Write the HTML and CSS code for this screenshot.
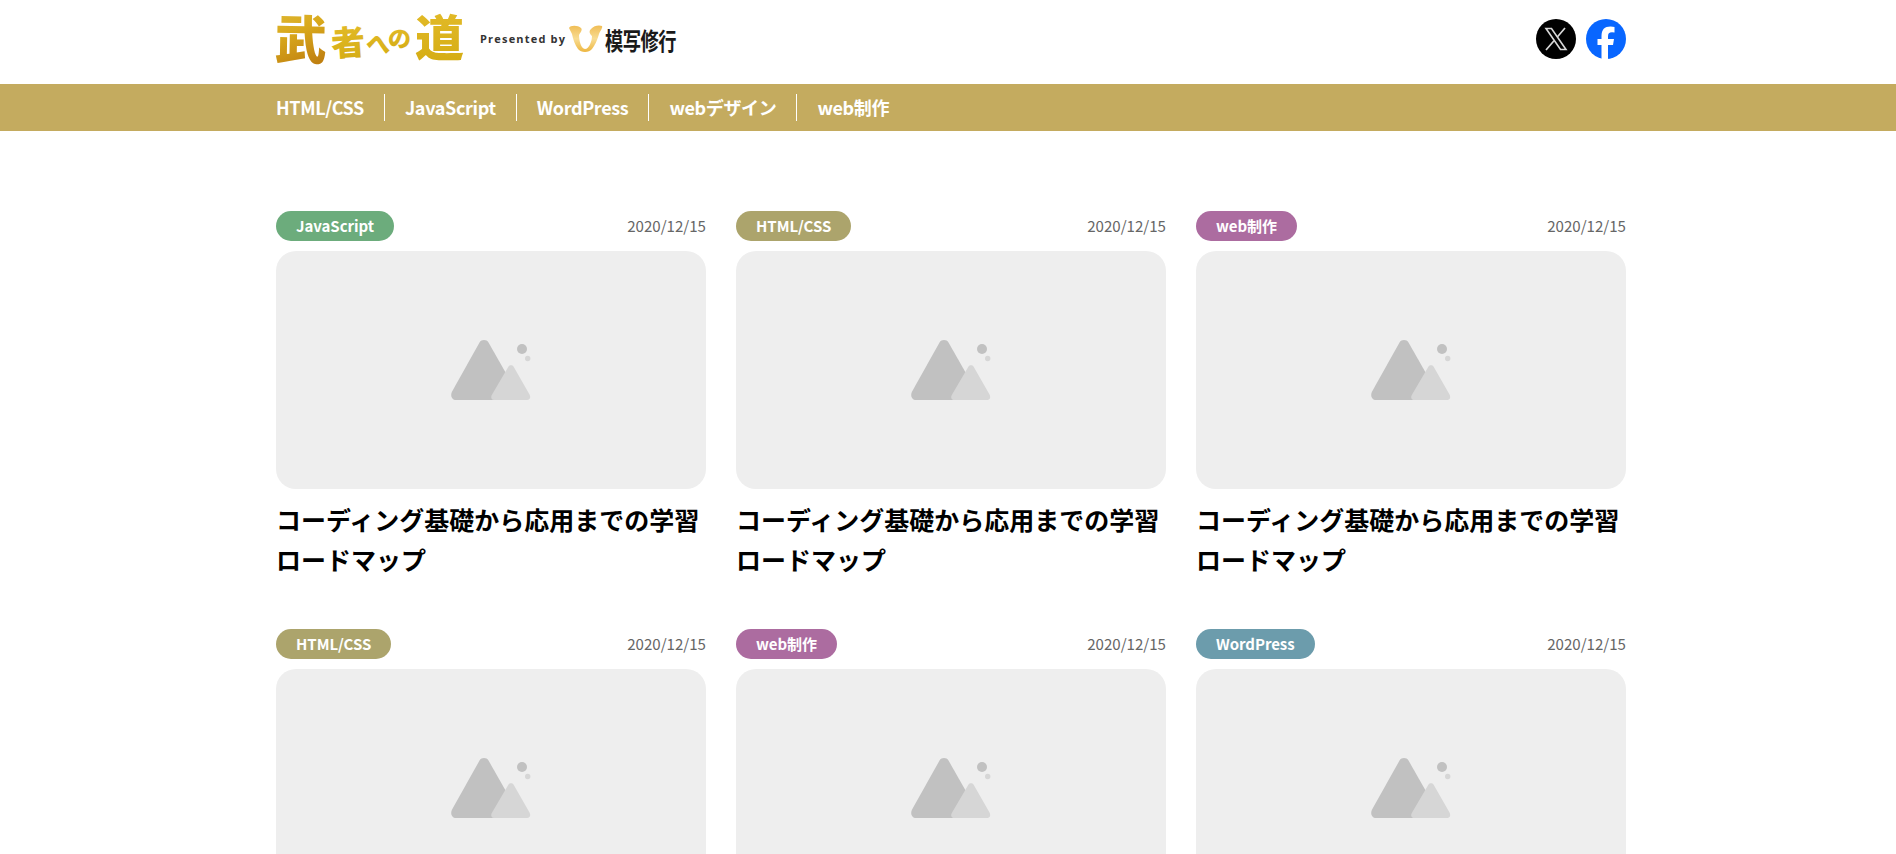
FILE: index.html
```html
<!DOCTYPE html>
<html lang="ja">
<head>
<meta charset="utf-8">
<title>武者への道</title>
<link rel="stylesheet" href="styles.css">
</head>
<body>
<svg class="defs" width="0" height="0" aria-hidden="true">
  <symbol id="noimage" viewBox="0 0 80 60">
    <path fill="#c1c1c1" d="M28.500 2.500C30.500-.7 35.500-.7 37.500 2.500L64 49V60H5C1 60-.8 56 .8 52Z"/>
    <path fill="#d6d6d6" d="M57.500 26.500C58.500 24.700 61.500 24.700 62.500 26.500L78.500 54.500C80 57.500 79 60 76 60H43C40.500 60 39.500 57.500 40.800 55Z"/>
    <circle cx="71" cy="9" r="5" fill="#c1c1c1"/>
    <circle cx="76.700" cy="18.500" r="2.700" fill="#d6d6d6"/>
  </symbol>
</svg>
<header class="header">
  <div class="container header__inner">
    <svg class="logo" viewBox="0 0 401 54" width="401" height="54" role="img">
      <defs>
        <linearGradient id="gold" x1="0" y1="0" x2=".3" y2="1">
          <stop offset="0" stop-color="#e0bd3c"/><stop offset=".5" stop-color="#d9a91c"/><stop offset="1" stop-color="#c08010"/>
        </linearGradient>
        <linearGradient id="yellow" x1="0" y1="0" x2="0" y2="1">
          <stop offset="0" stop-color="#e5bd2c"/><stop offset="1" stop-color="#d3ab12"/>
        </linearGradient>
        <linearGradient id="horn" x1="0" y1="0" x2="0" y2="1">
          <stop offset="0" stop-color="#f0bd55"/><stop offset=".5" stop-color="#f8dc92"/><stop offset="1" stop-color="#edb640"/>
        </linearGradient>
      </defs>
      <g class="logo__brush">
        <text x="-1" y="47" font-size="52" fill="url(#gold)" transform="rotate(1 25 25)">武</text>
        <text x="55" y="43" font-size="34" fill="url(#yellow)" transform="rotate(-4 72 30)">者</text>
        <text x="90" y="41" font-size="25" fill="url(#yellow)" transform="rotate(6 102 32)">へ</text>
        <text x="112" y="35" font-size="23" fill="url(#yellow)" transform="rotate(6 124 26)">の</text>
        <text x="139" y="44" font-size="49" fill="url(#yellow)">道</text>
      </g>
      <text class="logo__by" x="204" y="31" textLength="85">Presented by</text>
      <path fill="url(#horn)" d="M293 16C294 13 302 13 305 16C307 18 304 21 303 23C303 28 305 37 309 37C313 37 316 29 316 24C313 21 313 19 315 17C318 13 324 13 326 14C327 16 324 19 323 22C321 29 319 33 316 37C313 41 305 41 302 37C299 33 297 27 296 22Z"/>
      <g transform="translate(329 37.500) scale(.76 1)"><text class="logo__name" textLength="94">模写修行</text></g>
    </svg>
    <div class="sns">
      <svg viewBox="0 0 40 40" width="40" height="40"><circle cx="20" cy="20" r="20"/><path d="M10 9.500H15.500L30 30.500H24.500Z" fill="none" stroke="#d8d8d8" stroke-width="1.600"/><path d="M29 9L21.300 18M18 21.700L10 31" stroke="#d8d8d8" stroke-width="1.700"/></svg>
      <svg viewBox="0 0 40 40" width="40" height="40"><circle cx="20" cy="20" r="20" fill="#0866ff"/><path fill="#fff" d="M15.500 40V26H11.500V20H15.500V17C15.500 10.500 18.500 7.500 24.500 7.500Q27 7.500 28.500 8V13.500Q27.500 13.300 26 13.300C23 13.300 22 14.500 22 17.500V20H28L27 26H22V40Z"/></svg>
    </div>
  </div>
</header>
<nav class="nav">
  <ul class="container nav__list">
    <li class="nav__item">HTML/CSS</li>
    <li class="nav__item">JavaScript</li>
    <li class="nav__item">WordPress</li>
    <li class="nav__item">webデザイン</li>
    <li class="nav__item">web制作</li>
  </ul>
</nav>
<main class="container cards">
  <article class="card">
    <div class="card__meta"><span class="tag tag--js">JavaScript</span><time>2020/12/15</time></div>
    <div class="card__image"><svg width="80" height="60"><use href="#noimage"/></svg></div>
    <h2 class="card__title">コーディング基礎から応用までの学習ロードマップ</h2>
  </article>
  <article class="card">
    <div class="card__meta"><span class="tag tag--html">HTML/CSS</span><time>2020/12/15</time></div>
    <div class="card__image"><svg width="80" height="60"><use href="#noimage"/></svg></div>
    <h2 class="card__title">コーディング基礎から応用までの学習ロードマップ</h2>
  </article>
  <article class="card">
    <div class="card__meta"><span class="tag tag--web">web制作</span><time>2020/12/15</time></div>
    <div class="card__image"><svg width="80" height="60"><use href="#noimage"/></svg></div>
    <h2 class="card__title">コーディング基礎から応用までの学習ロードマップ</h2>
  </article>
  <article class="card">
    <div class="card__meta"><span class="tag tag--html">HTML/CSS</span><time>2020/12/15</time></div>
    <div class="card__image"><svg width="80" height="60"><use href="#noimage"/></svg></div>
  </article>
  <article class="card">
    <div class="card__meta"><span class="tag tag--web">web制作</span><time>2020/12/15</time></div>
    <div class="card__image"><svg width="80" height="60"><use href="#noimage"/></svg></div>
  </article>
  <article class="card">
    <div class="card__meta"><span class="tag tag--wp">WordPress</span><time>2020/12/15</time></div>
    <div class="card__image"><svg width="80" height="60"><use href="#noimage"/></svg></div>
  </article>
</main>
</body>
</html>
```
FILE: styles.css
```css
* { box-sizing: border-box; margin: 0; padding: 0; }
html { height: 100%; overflow: hidden; }
body {
  display: flex;
  flex-direction: column;
  height: 100vh;
  overflow: hidden;
  background: #fff;
  color: #000;
  font-family: "Noto Sans CJK JP", "Noto Sans", sans-serif;
}
.defs { display: block; flex: none; }
.header, .nav { flex: none; }
.container { width: 1350px; margin-left: calc(50% - 672px); }
.header__inner { display: flex; justify-content: space-between; height: 84px; padding-top: 12px; }
.logo { overflow: visible; }
.logo__brush { font-weight: 900; }
.logo__by { font-family: "Open Sans", sans-serif; font-size: 11px; font-weight: 700; fill: #333; }
.logo__name { font-size: 24px; font-weight: 700; fill: #1a1a1a; }
.sns { display: flex; gap: 10px; padding-top: 7px; }
.nav { background: #c4ab5f; padding: 10px 0; }
.nav__list { display: flex; list-style: none; }
.nav__item {
  padding: 0 20px;
  border-right: 1px solid #fff;
  color: #fff;
  font-size: 18px;
  font-weight: 700;
  line-height: 27px;
  letter-spacing: -.35px;
}
.nav__item:first-child { padding-left: 0; }
.nav__item:last-child { border-right: 0; }
.cards {
  display: grid;
  flex: 1;
  min-height: 0;
  grid-template-columns: repeat(3, 1fr);
  grid-template-rows: 368px 278px;
  gap: 50px 30px;
  padding-top: 80px;
  overflow: hidden;
}
.card__meta { display: flex; justify-content: space-between; height: 30px; margin-bottom: 10px; }
.card__meta time { color: #666; font-size: 15.100px; line-height: 28px; }
.tag {
  height: 30px;
  padding: 0 20px;
  border-radius: 15px;
  color: #fff;
  font-size: 15px;
  font-weight: 700;
  line-height: 29px;
  letter-spacing: -.05px;
}
.tag--js { background: #6cac7c; }
.tag--html { background: #aca46c; }
.tag--web { background: #ac6ca0; }
.tag--wp { background: #6c9cac; }
.card__image {
  display: flex;
  align-items: center;
  justify-content: center;
  height: 238px;
  border-radius: 20px;
  background: #eee;
}
.card__title { margin-top: 10px; font-size: 25px; font-weight: 700; line-height: 40px; }
```
